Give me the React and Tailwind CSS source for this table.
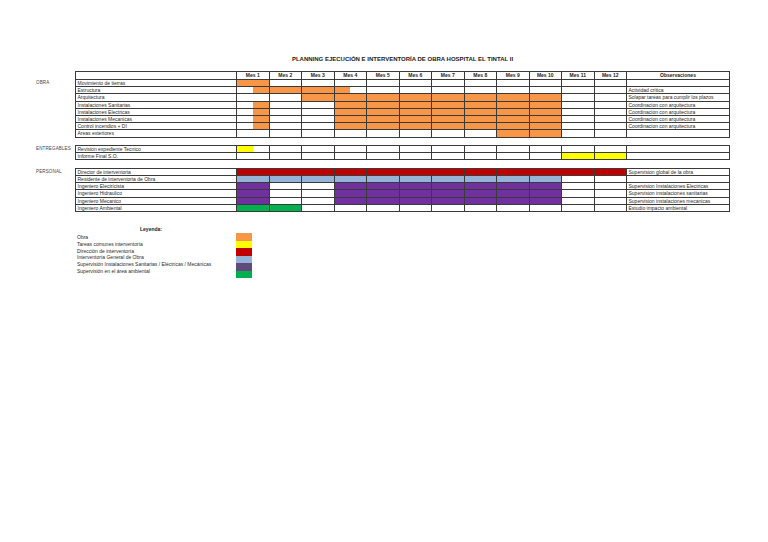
import React from "react";

const COLORS = {
  o: "bg-[#f79646]",
  y: "bg-[#ffff00]",
  r: "bg-[#c00000]",
  b: "bg-[#95b3d7]",
  p: "bg-[#7030a0]",
  g: "bg-[#00b050]",
};

const obra = [
  ["Movimiento de tierras", "F...........", "o", ""],
  ["Estructura", "RFFL........", "o", "Actividad crítica"],
  ["Arquitectura", "..FFFFFFFF..", "o", "Solapar tareas para cumplir los plazos"],
  ["Instalaciones Sanitarias", "R..FFFFFFF..", "o", "Coordinacion con arquitectura"],
  ["Instalaciones Electricas", "R..FFFFFFF..", "o", "Coordinacion con arquitectura"],
  ["Instalaciones Mecanicas", "R..FFFFFFF..", "o", "Coordinacion con arquitectura"],
  ["Control incendios + DI", "R..FFFFFFF..", "o", "Coordinacion con arquitectura"],
  ["Areas exteriores", "........FF..", "o", ""],
];

const entregables = [
  ["Revision expediente Tecnico", "L...........", "y", ""],
  ["Informe Final S.O.", "..........FF", "y", ""],
];

const personal = [
  ["Director de interventoria", "FFFFFFFFFFFF", "r", "Supervision global de la obra"],
  ["Residente de interventoria de Obra", "FFFFFFFFFF..", "b", ""],
  ["Ingeniero Electricista", "F..FFFFFFF..", "p", "Supervision Instalaciones Electricas"],
  ["Ingeniero Hidraulico", "F..FFFFFFF..", "p", "Supervision instalaciones sanitarias"],
  ["Ingeniero Mecanico", "F..FFFFFFF..", "p", "Supervision instalaciones mecanicas"],
  ["Ingeniero Ambiental", "FF..........", "g", "Estudio impacto ambiental"],
];

const legend = [
  ["Obra", "bg-[#f79646]"],
  ["Tareas comunes interventoría", "bg-[#ffff00]"],
  ["Dirección de interventoría", "bg-[#c00000]"],
  ["Interventoría General de Obra", "bg-[#95b3d7]"],
  ["Supervisión Instalaciones Sanitarias / Eléctricas / Mecánicas", "bg-[#604a7b]"],
  ["Supervisión en el área ambiental", "bg-[#00b050]"],
];

const months = Array.from({ length: 12 }, (_, i) => `Mes ${i + 1}`);

function TextCell({ children }) {
  return (
    <div className="h-[6.2px] bg-white pl-[1.5px] text-[5px] leading-[6.2px] text-[#2a2a2a] whitespace-nowrap overflow-hidden">
      {children}
    </div>
  );
}

function FillCell({ kind, color }) {
  const c = COLORS[color];
  if (kind === "F") return <div className={`h-[6.2px] ${c}`} />;
  if (kind === "L")
    return (
      <div className="h-[6.2px] bg-white flex">
        <div className={`w-1/2 ${c}`} />
      </div>
    );
  if (kind === "R")
    return (
      <div className="h-[6.2px] bg-white flex justify-end">
        <div className={`w-1/2 ${c}`} />
      </div>
    );
  return <div className="h-[6.2px] bg-white" />;
}

function Rows({ rows }) {
  return rows.map(([label, spec, color, obs]) => (
    <React.Fragment key={label}>
      <TextCell>{label}</TextCell>
      {spec.split("").map((k, i) => (
        <FillCell key={i} kind={k} color={color} />
      ))}
      <TextCell>{obs}</TextCell>
    </React.Fragment>
  ));
}

function Grid({ children }) {
  return (
    <div className="w-[655px] grid grid-cols-[160px_repeat(12,31.5px)_102px] gap-px p-px bg-[#3a3a3a]">
      {children}
    </div>
  );
}

function Section({ label, top, children }) {
  return (
    <div className="flex pl-[36px]">
      <div className={`w-[39px] ${top} text-[4.5px] leading-[6.2px] text-[#444] tracking-[0.15px] whitespace-nowrap overflow-hidden`}>
        {label}
      </div>
      {children}
    </div>
  );
}

export default function App() {
  return (
    <div className="w-[768px] h-[542px] bg-white font-['Liberation_Sans',Arial,sans-serif] overflow-hidden">
      <div className="pt-[56px] flex flex-col">
        <div className="ml-[75px] w-[655px] text-center text-[6px] leading-[7px] font-bold text-[#1a1a1a]">
          PLANNING EJECUCIÓN E INTERVENTORÍA DE OBRA HOSPITAL EL TINTAL II
        </div>

        <div className="mt-[8px]">
          <Section label="OBRA" top="pt-[9px]">
            <Grid>
              <div className="h-[7px] bg-white" />
              {months.map((m) => (
                <div key={m} className="h-[7px] bg-white text-center text-[5px] leading-[7px] font-bold text-[#1a1a1a]">
                  {m}
                </div>
              ))}
              <div className="h-[7px] bg-white text-center text-[5px] leading-[7px] font-bold text-[#1a1a1a]">
                Observaciones
              </div>
              <Rows rows={obra} />
            </Grid>
          </Section>
        </div>

        <div className="mt-[7px]">
          <Section label="ENTREGABLES" top="pt-px">
            <Grid>
              <Rows rows={entregables} />
            </Grid>
          </Section>
        </div>

        <div className="mt-[8px]">
          <Section label="PERSONAL" top="pt-px">
            <Grid>
              <Rows rows={personal} />
            </Grid>
          </Section>
        </div>

        <div className="mt-[14px] ml-[75px] w-[152px] text-center text-[5px] leading-[6px] font-bold text-[#1a1a1a]">
          Leyenda:
        </div>
        <div className="flex ml-[77px] mt-[1px]">
          <div className="w-[159px] flex flex-col pt-[1px]">
            {legend.map(([t]) => (
              <div key={t} className="h-[6.8px] text-[5px] leading-[6.8px] text-[#2a2a2a] whitespace-nowrap">
                {t}
              </div>
            ))}
          </div>
          <div className="w-[16px] flex flex-col">
            {legend.map(([t, c]) => (
              <div key={t} className={`h-[7.5px] ${c}`} />
            ))}
          </div>
        </div>
      </div>
    </div>
  );
}
